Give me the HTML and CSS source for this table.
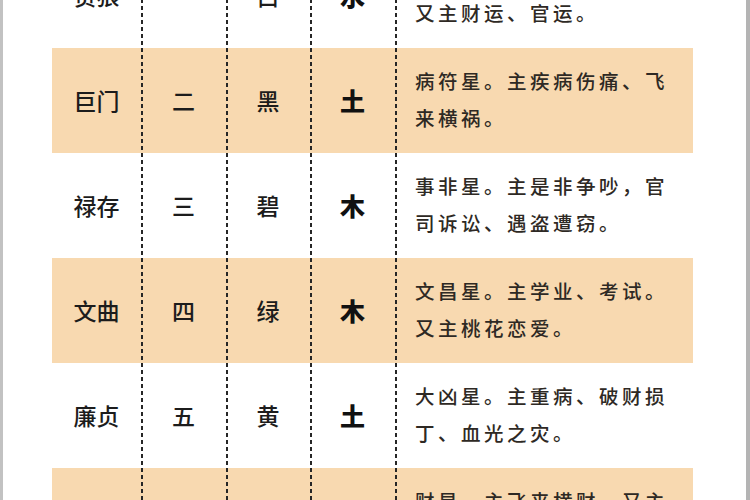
FILE: index.html
```html
<!DOCTYPE html>
<html lang="zh-CN">
<head>
<meta charset="utf-8">
<link rel="stylesheet" href="styles.css">
</head>
<body>
<div class="frame">
  <div class="table">
    <div class="row">
      <div class="cell name">贪狼</div>
      <div class="cell num">一</div>
      <div class="cell color">白</div>
      <div class="cell elem">水</div>
      <div class="cell desc">桃花星。主人缘、婚姻，<br>又主财运、官运。</div>
    </div>
    <div class="row alt">
      <div class="cell name">巨门</div>
      <div class="cell num">二</div>
      <div class="cell color">黑</div>
      <div class="cell elem">土</div>
      <div class="cell desc">病符星。主疾病伤痛、飞<br>来横祸。</div>
    </div>
    <div class="row">
      <div class="cell name">禄存</div>
      <div class="cell num">三</div>
      <div class="cell color">碧</div>
      <div class="cell elem">木</div>
      <div class="cell desc">事非星。主是非争吵，官<br>司诉讼、遇盗遭窃。</div>
    </div>
    <div class="row alt">
      <div class="cell name">文曲</div>
      <div class="cell num">四</div>
      <div class="cell color">绿</div>
      <div class="cell elem">木</div>
      <div class="cell desc">文昌星。主学业、考试。<br>又主桃花恋爱。</div>
    </div>
    <div class="row">
      <div class="cell name">廉贞</div>
      <div class="cell num">五</div>
      <div class="cell color">黄</div>
      <div class="cell elem">土</div>
      <div class="cell desc">大凶星。主重病、破财损<br>丁、血光之灾。</div>
    </div>
    <div class="row alt">
      <div class="cell name">武曲</div>
      <div class="cell num">六</div>
      <div class="cell color">白</div>
      <div class="cell elem">金</div>
      <div class="cell desc">财星。主飞来横财，又主<br>升官发财。</div>
    </div>
  </div>
</div>
</body>
</html>
```

FILE: styles.css
```css
html, body {
  margin: 0;
  padding: 0;
  background: #ffffff;
}

.frame {
  width: 750px;
  height: 500px;
  box-sizing: border-box;
  border-left: 3px solid #c2c2c2;
  border-right: 4px solid #b4b4b4;
  overflow: hidden;
  background: #ffffff;
}

.table {
  margin-left: 49px;
  margin-top: -57px;
  width: 641px;
  display: flex;
  flex-direction: column;
}

.row {
  display: grid;
  grid-template-columns: 89px 85px 84px 85px 298px;
  height: 105px;
}

.row.alt {
  background: #f8d9b0;
}

.cell {
  display: flex;
  align-items: center;
  justify-content: center;
  font-family: "Noto Sans CJK SC", "Noto Sans", sans-serif;
  color: #1c1c1c;
}

.cell + .cell {
  background-image: repeating-linear-gradient(to bottom, #262626 0 4px, transparent 4px 7px);
  background-size: 2px 100%;
  background-repeat: no-repeat;
  background-position: left top;
}

.name {
  font-size: 23px;
  font-weight: 500;
  padding-bottom: 2px;
}

.num, .color {
  font-size: 23px;
  font-weight: 500;
  padding-bottom: 2px;
}

.elem {
  font-size: 25px;
  font-weight: 900;
  color: #111;
  padding-bottom: 2px;
}

.desc {
  justify-content: flex-start;
  padding-left: 20px;
  padding-bottom: 4px;
  font-size: 19.5px;
  line-height: 37px;
  letter-spacing: 3.5px;
  color: #2e2924;
  font-weight: 500;
}
```
